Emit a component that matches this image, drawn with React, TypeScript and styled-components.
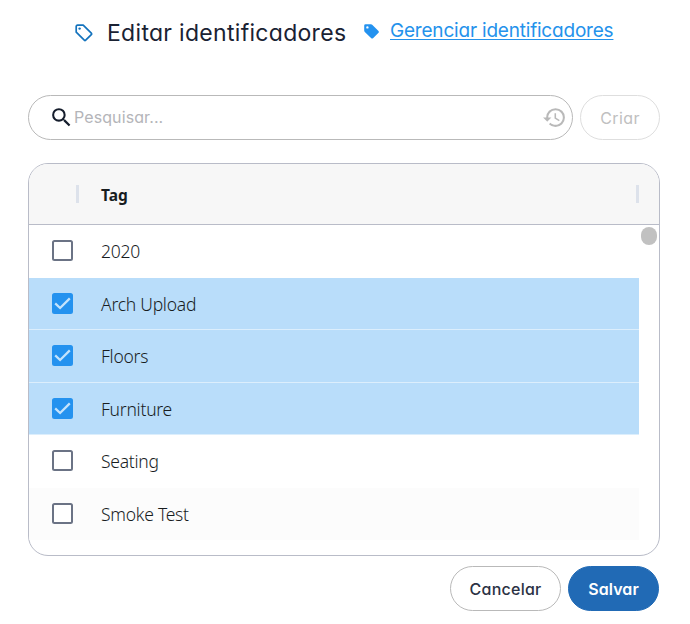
import React from "react";
import styled, { createGlobalStyle } from "styled-components";
import { MdHistory, MdSearch } from "react-icons/md";

const GlobalStyle = createGlobalStyle`
  *, *::before, *::after { box-sizing: border-box; }
  body { margin: 0; background: #fff; overflow: hidden; }
  button, input { font: inherit; }
`;

const Dialog = styled.main`
  width: 690px;
  height: 624px;
  padding: 12px 30px 13px 28px;
  display: flex;
  flex-direction: column;
  font-family: Inter, sans-serif;
  font-feature-settings: "cv11";
  color: #1a2233;
`;

const Header = styled.header`
  display: flex;
  align-items: center;
  height: 42px;
  padding-left: 47px;
`;

const Title = styled.h1`
  margin: 0 17px 0 14px;
  width: 240px;
  font-size: 23px;
  font-weight: 400;
  line-height: 42px;
  letter-spacing: 0.3px;
  white-space: nowrap;
`;

const ManageLink = styled.a`
  display: flex;
  align-items: center;
  gap: 11px;
  color: #2492eb;
  font-size: 19px;
  line-height: 38px;
  height: 42px;
  padding-bottom: 4px;
  letter-spacing: -0.2px;
  white-space: nowrap;
  svg {
    margin-top: 1px;
  }
  span {
    text-decoration: underline;
    text-decoration-thickness: 1px;
    text-underline-offset: 2px;
  }
`;

const Toolbar = styled.div`
  display: flex;
  gap: 7px;
  height: 45px;
  margin-top: 41px;
`;

const SearchBox = styled.label`
  display: flex;
  align-items: center;
  width: 545px;
  border: 1px solid #b9b9b9;
  border-radius: 23px;
  padding: 0 5px 0 20px;
  color: #b9b9b9;
`;

const SearchInput = styled.input`
  flex: 1;
  min-width: 0;
  border: 0;
  outline: 0;
  padding: 0 0 2px;
  background: transparent;
  font-size: 16px;
  letter-spacing: 0.1px;
  font-feature-settings: "cv11";
  &::placeholder { color: #b4b5b9; opacity: 1; }
`;

const PillButton = styled.button<{ $kind: "outline" | "primary" | "disabled"; $width: number }>`
  width: ${({ $width }) => $width}px;
  height: 45px;
  padding: 0;
  border-radius: 23px;
  border: 1px solid ${({ $kind }) => ({ outline: "#b9b9b9", primary: "#216ab5", disabled: "#dedede" })[$kind]};
  background: ${({ $kind }) => ($kind === "primary" ? "#216ab5" : "#fff")};
  color: ${({ $kind }) => ({ outline: "#2b3244", primary: "#fff", disabled: "#c0c0c0" })[$kind]};
  font-size: 16px;
  font-weight: ${({ $kind }) => ({ outline: 500, primary: 600, disabled: 400 })[$kind]};
  letter-spacing: ${({ $kind }) => ({ outline: 0.25, primary: 0.1, disabled: 0.4 })[$kind]}px;
  font-feature-settings: "cv11";
`;

const Grid = styled.section`
  width: 632px;
  height: 393px;
  margin-top: 23px;
  border: 1px solid #b9bcc8;
  border-radius: 20px;
  overflow: hidden;
  font-family: "Noto Sans", sans-serif;
  font-feature-settings: normal;
  color: #181d1f;
`;

const GridHeader = styled.div`
  display: flex;
  align-items: center;
  height: 61px;
  background: #f7f7f7;
  border-bottom: 1px solid #b9bcc8;
  padding: 0 20px 0 47px;
`;

const ResizeHandle = styled.span`
  width: 3px;
  height: 18px;
  background: #dde2eb;
`;

const HeaderLabel = styled.span`
  flex: 1;
  padding: 2px 0 0 22px;
  font-size: 15.5px;
  font-weight: 700;
  line-height: 20px;
`;

const GridBody = styled.div`
  display: flex;
  justify-content: space-between;
`;

const Rows = styled.div`
  width: 610px;
`;

const Row = styled.div<{ $selected: boolean; $striped: boolean }>`
  display: flex;
  align-items: center;
  height: 52.5px;
  padding-left: 23px;
  gap: 28px;
  border-bottom: 1px solid ${({ $selected }) => ($selected ? "#dceefc" : "transparent")};
  background: ${({ $selected, $striped }) => ($selected ? "#b9ddfa" : $striped ? "#fcfcfc" : "#fff")};
  font-size: 17.5px;
  font-weight: 300;
  letter-spacing: -0.25px;
`;

const RowLabel = styled.span`
  line-height: 24px;
  padding-top: 1px;
`;

const Check = styled.span<{ $checked: boolean }>`
  width: 21px;
  height: 21px;
  border-radius: 2.5px;
  border: 2px solid ${({ $checked }) => ($checked ? "#2492ef" : "#6b7385")};
  background: ${({ $checked }) => ($checked ? "#2492ef" : "#fff")};
  display: flex;
  align-items: center;
  justify-content: center;
`;

const ScrollThumb = styled.span`
  width: 16px;
  height: 18px;
  margin: 2px 2px 0 0;
  border-radius: 8px;
  background: #c1c1c1;
`;

const Footer = styled.footer`
  display: flex;
  justify-content: flex-end;
  gap: 7px;
  margin-top: 10px;
  padding-right: 1px;
`;

const TagOutline = () => (
  <svg width="18" height="18" viewBox="0 0 18 18" fill="none">
    <path d="M1.2 2.6Q1.2 1.2 2.6 1.2H8.2L16.3 9.2Q17 9.9 16.3 10.6L10.7 16.2Q10 16.9 9.3 16.2L1.2 8.2Z" stroke="#1473bd" strokeWidth="1.7" strokeLinejoin="round" />
    <circle cx="4.6" cy="4.6" r="1.2" fill="#1473bd" />
  </svg>
);

const TagSolid = () => (
  <svg width="15" height="15" viewBox="0 0 15 15">
    <path fillRule="evenodd" d="M.2 1.6Q.2.2 1.6.2H7Q7.7.2 8.2.7L14.5 7Q15.2 7.9 14.5 8.7L9 14.2Q8.1 15 7.3 14.2L.8 7.9Q.2 7.4.2 6.6ZM3.4 2.2A1.2 1.2 0 1 0 3.4 4.6A1.2 1.2 0 1 0 3.4 2.2Z" fill="#2492ef" />
  </svg>
);

const CheckMark = () => (
  <svg width="17" height="17" viewBox="0 0 17 17" fill="none">
    <path d="M1.2 8.4L6.1 13L15.8 3.4" stroke="#c4e3fc" strokeWidth="2.3" />
  </svg>
);

const tags = [
  { name: "2020", selected: false },
  { name: "Arch Upload", selected: true },
  { name: "Floors", selected: true },
  { name: "Furniture", selected: true },
  { name: "Seating", selected: false },
  { name: "Smoke Test", selected: false },
];

export default function App() {
  return (
    <>
      <GlobalStyle />
      <Dialog>
        <Header>
          <TagOutline />
          <Title>Editar identificadores</Title>
          <ManageLink>
            <TagSolid />
            <span>Gerenciar identificadores</span>
          </ManageLink>
        </Header>
        <Toolbar>
          <SearchBox>
            <MdSearch size={25} color="#151d2c" />
            <SearchInput placeholder="Pesquisar..." />
            <MdHistory size={25} />
          </SearchBox>
          <PillButton $kind="disabled" $width={80}>Criar</PillButton>
        </Toolbar>
        <Grid>
          <GridHeader>
            <ResizeHandle />
            <HeaderLabel>Tag</HeaderLabel>
            <ResizeHandle />
          </GridHeader>
          <GridBody>
            <Rows>
              {tags.map((tag, i) => (
                <Row key={tag.name} $selected={tag.selected} $striped={i % 2 === 1}>
                  <Check $checked={tag.selected}>{tag.selected && <CheckMark />}</Check>
                  <RowLabel>{tag.name}</RowLabel>
                </Row>
              ))}
            </Rows>
            <ScrollThumb />
          </GridBody>
        </Grid>
        <Footer>
          <PillButton $kind="outline" $width={111}>Cancelar</PillButton>
          <PillButton $kind="primary" $width={91}>Salvar</PillButton>
        </Footer>
      </Dialog>
    </>
  );
}
